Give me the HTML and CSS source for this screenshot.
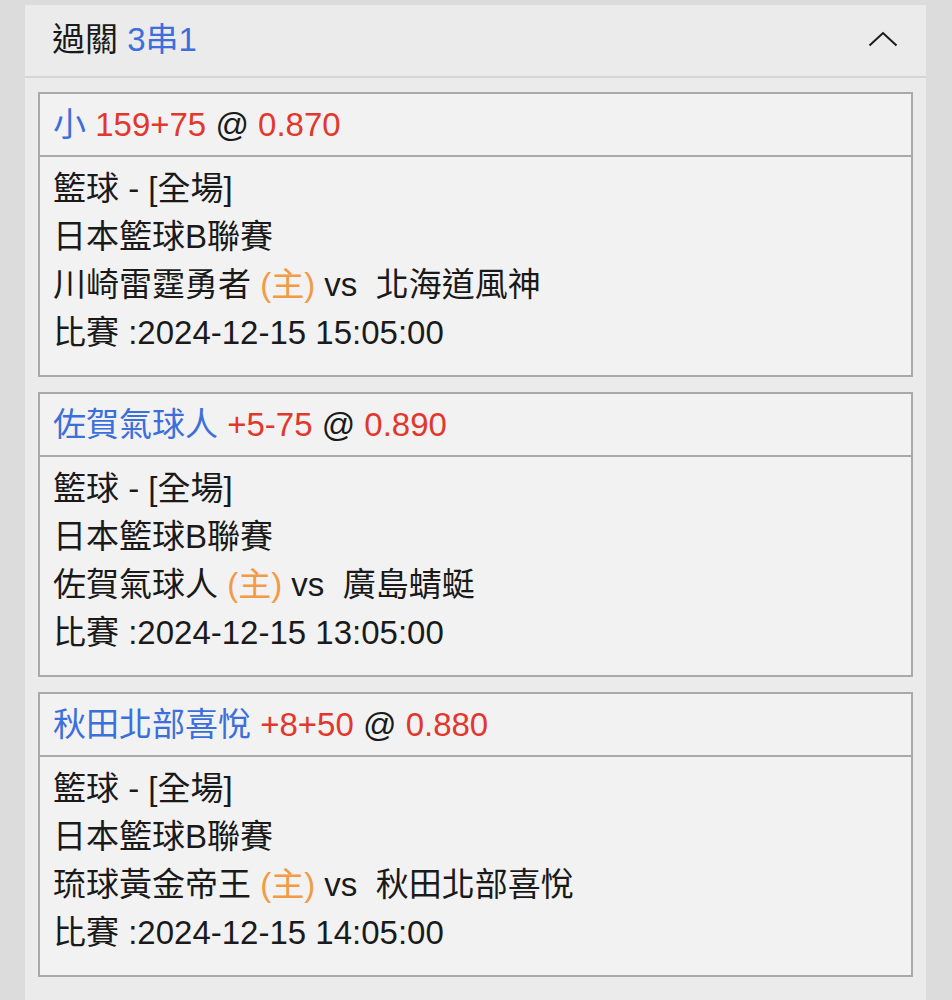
FILE: index.html
```html
<!DOCTYPE html>
<html lang="zh-Hant">
<head>
<meta charset="utf-8">
<link rel="stylesheet" href="styles.css">
</head>
<body>
<div class="panel">
  <div class="panel-head">
    <div class="head-title">過關 <span class="blue">3串1</span></div>
    <svg class="chev" width="30" height="16" viewBox="0 0 30 16"><path d="M1.5 14.5 L15 2 L28.5 14.5" fill="none" stroke="#1a1a1a" stroke-width="2"/></svg>
  </div>
  <div class="panel-body">
    <div class="card">
      <div class="card-title"><span class="blue">小</span> <span class="red">159+75</span> @ <span class="red">0.870</span></div>
      <div class="card-body">
        <div>籃球 - [全場]</div>
        <div>日本籃球B聯賽</div>
        <div>川崎雷霆勇者 <span class="orange">(主)</span> vs&nbsp; 北海道風神</div>
        <div>比賽 :2024-12-15 15:05:00</div>
      </div>
    </div>
    <div class="card">
      <div class="card-title"><span class="blue">佐賀氣球人</span> <span class="red">+5-75</span> @ <span class="red">0.890</span></div>
      <div class="card-body">
        <div>籃球 - [全場]</div>
        <div>日本籃球B聯賽</div>
        <div>佐賀氣球人 <span class="orange">(主)</span> vs&nbsp; 廣島蜻蜓</div>
        <div>比賽 :2024-12-15 13:05:00</div>
      </div>
    </div>
    <div class="card">
      <div class="card-title"><span class="blue">秋田北部喜悅</span> <span class="red">+8+50</span> @ <span class="red">0.880</span></div>
      <div class="card-body">
        <div>籃球 - [全場]</div>
        <div>日本籃球B聯賽</div>
        <div>琉球黃金帝王 <span class="orange">(主)</span> vs&nbsp; 秋田北部喜悅</div>
        <div>比賽 :2024-12-15 14:05:00</div>
      </div>
    </div>
  </div>
</div>
</body>
</html>
```
FILE: styles.css
```css
html, body {
  margin: 0;
  padding: 0;
  background: #dcdcdc;
}
body {
  padding: 5px 26px 0 25px;
  font-family: "Liberation Sans", "Noto Sans CJK TC", sans-serif;
  color: #1a1a1a;
  height: 1000px;
  box-sizing: border-box;
  overflow: hidden;
}
.panel {
  background: #ebebeb;
  min-height: 995px;
}
.panel-head {
  height: 71px;
  border-bottom: 2px solid #d6d6d6;
  display: flex;
  align-items: center;
  justify-content: space-between;
  padding: 0 28px 0 27px;
}
.head-title {
  font-size: 33px;
  line-height: 71px;
  margin-top: -2px;
}
.chev {
  margin-top: -4px;
}
.blue { color: #3b6fdb; }
.red { color: #e2372c; }
.orange { color: #f29a45; }
.panel-body {
  padding: 14px 13px 0 13px;
  display: flex;
  flex-direction: column;
  gap: 15px;
}
.card {
  background: #f2f2f2;
  border: 2px solid #a9a9a9;
}
.card-title {
  height: 61px;
  line-height: 61px;
  font-size: 33px;
  padding-left: 13px;
  border-bottom: 2px solid #a9a9a9;
}
.card-body {
  padding: 8px 13px 18px 13px;
  font-size: 33px;
  line-height: 48px;
}
```
